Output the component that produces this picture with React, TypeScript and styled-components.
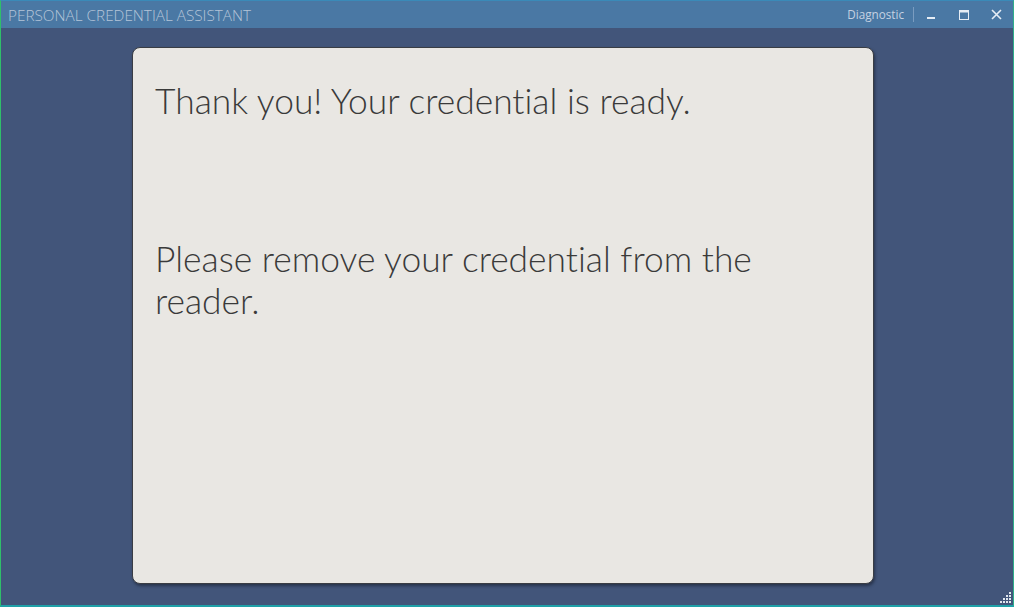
import * as React from 'react';
import styled, { createGlobalStyle } from 'styled-components';

const GlobalStyle = createGlobalStyle`
  html, body {
    margin: 0;
    padding: 0;
    background: #42557a;
  }
`;

const Window = styled.div`
  position: relative;
  box-sizing: border-box;
  width: 1014px;
  height: 607px;
  display: flex;
  flex-direction: column;
  background: #42557a;
  border-left: 1px solid #2fbf6a;
  border-right: 1px solid #2fae8a;
  border-top: 1px solid #3a8ab8;
  border-bottom: 2px solid #1fa0a8;
  overflow: hidden;
`;

const TitleBar = styled.div`
  height: 27px;
  flex: none;
  display: flex;
  align-items: center;
  background: #4a78a4;
  font-family: 'Open Sans', 'Noto Sans', sans-serif;
`;

const Title = styled.div`
  flex: 1;
  padding-left: 7px;
  font-size: 15.3px;
  font-weight: 300;
  color: #b4c4d8;
`;

const Diagnostic = styled.div`
  font-size: 11.7px;
  color: #c4d2e2;
  padding-right: 9px;
  border-right: 1px solid #7a9cc0;
  line-height: 15px;
`;

const WinButton = styled.div`
  width: 33px;
  height: 27px;
  display: flex;
  align-items: center;
  justify-content: center;
  color: #e6edf5;
`;

const Body = styled.div`
  flex: 1;
  display: flex;
  padding: 19px 0 0 131px;
`;

const Card = styled.div`
  box-sizing: border-box;
  width: 742px;
  height: 537px;
  background: #e9e7e3;
  border-radius: 8px;
  border: 1px solid #3a3d44;
  box-shadow: 1px 2px 3px rgba(20, 25, 40, 0.55);
  padding: 32px 21px 32px 22px;
  font-family: Lato, 'Open Sans', sans-serif;
  font-weight: 300;
  font-variant-ligatures: none;
  color: #3a3a3a;
`;

const Message = styled.p<{ $gap?: number }>`
  margin: 0;
  margin-top: ${p => p.$gap ?? 0}px;
  font-size: 35.4px;
  line-height: 42px;
  max-width: 650px;
`;

const Grip = styled.svg`
  position: absolute;
  right: 1px;
  bottom: 1px;
`;

const gripDots = [
  [9, 0], [9, 3], [6, 3], [9, 6], [6, 6], [3, 6], [9, 9], [6, 9], [3, 9], [0, 9],
];

const App = () => (
  <>
    <GlobalStyle />
    <Window>
      <TitleBar>
        <Title>PERSONAL CREDENTIAL ASSISTANT</Title>
        <Diagnostic>Diagnostic</Diagnostic>
        <WinButton>
          <svg width="10" height="10" viewBox="0 0 10 10">
            <rect x="1" y="7" width="8" height="2" fill="currentColor" />
          </svg>
        </WinButton>
        <WinButton>
          <svg width="10" height="10" viewBox="0 0 10 10">
            <rect x="0.5" y="0.5" width="9" height="9" fill="none" stroke="currentColor" />
            <rect x="0.5" y="0.5" width="9" height="2" fill="currentColor" />
          </svg>
        </WinButton>
        <WinButton>
          <svg width="11" height="11" viewBox="0 0 11 11">
            <path d="M1 1 L10 10 M10 1 L1 10" stroke="currentColor" strokeWidth="1.6" />
          </svg>
        </WinButton>
      </TitleBar>
      <Body>
        <Card>
          <Message>Thank you! Your credential is ready.</Message>
          <Message $gap={116}>Please remove your credential from the reader.</Message>
        </Card>
      </Body>
      <Grip width="12" height="12" viewBox="0 0 12 12">
        {gripDots.map(([x, y]) => (
          <rect key={`${x}-${y}`} x={x} y={y} width="2" height="2" fill="#dfe6ee" />
        ))}
      </Grip>
    </Window>
  </>
);

export default App;
